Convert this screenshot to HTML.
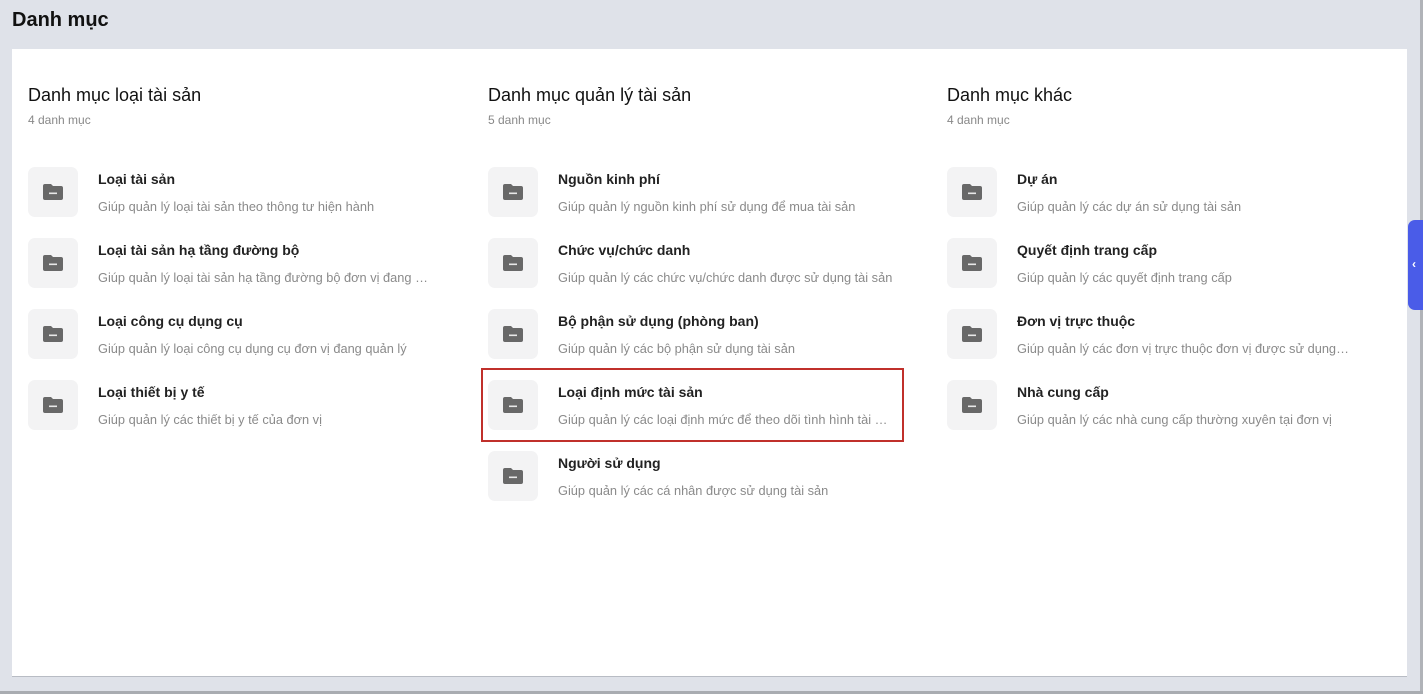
<!DOCTYPE html>
<html><head><meta charset="utf-8"><style>
*{margin:0;padding:0;box-sizing:border-box}
body{width:1423px;height:694px;background:#dfe2e9;font-family:"Liberation Sans","Noto Sans CJK SC",sans-serif;position:relative;overflow:hidden}
h1{position:absolute;left:12px;top:9px;font-size:20px;font-weight:bold;color:#111}
.panel{position:absolute;left:12px;top:49px;width:1395px;height:628px;background:#fff;border-bottom:1px solid #b8bcc4}
.rb{position:absolute;right:0;top:0;width:3px;height:694px;background:#b0b3b8}
.bb{position:absolute;left:0;bottom:0;width:1423px;height:3px;background:#a9acb1}
.tab{position:absolute;left:1408px;top:220px;width:15px;height:90px;background:#4a5ce8;border-radius:7px 0 0 7px;color:#fff;font-size:12px;line-height:88px;padding-left:4px;font-weight:bold}
.col{position:absolute;top:85px;width:420px}
.col h2{font-size:18px;font-weight:normal;color:#111;height:22px}
.col .cnt{font-size:12px;color:#888;margin-top:6px}
.item{position:absolute;left:0;height:50px;width:410px}
.ic{position:absolute;left:0;top:0;width:50px;height:50px;background:#f3f3f4;border-radius:7px}
.ic svg{position:absolute;left:15px;top:17px}
.t{position:absolute;left:70px;top:4px;font-size:14px;font-weight:bold;color:#222;white-space:nowrap}
.d{position:absolute;left:70px;top:32px;font-size:12.8px;color:#8a8a8a;white-space:nowrap;overflow:hidden;text-overflow:ellipsis;width:335px}
.sel{position:absolute;left:481px;top:368px;width:423px;height:74px;border:2px solid #c0302b}
</style></head><body>
<h1>Danh mục</h1>
<div class="panel"></div>
<div class="rb"></div><div class="bb"></div>
<div class="tab">‹</div>

<div class="col" style="left:28px">
<h2>Danh mục loại tài sản</h2><div class="cnt">4 danh mục</div>
</div>
<div class="col" style="left:488px">
<h2>Danh mục quản lý tài sản</h2><div class="cnt">5 danh mục</div>
</div>
<div class="col" style="left:947px">
<h2>Danh mục khác</h2><div class="cnt">4 danh mục</div>
</div>

<div id="items"></div>
<div class="sel"></div>
<script>
var cols=[[28,[["Loại tài sản","Giúp quản lý loại tài sản theo thông tư hiện hành"],["Loại tài sản hạ tầng đường bộ","Giúp quản lý loại tài sản hạ tầng đường bộ đơn vị đang quản lý"],["Loại công cụ dụng cụ","Giúp quản lý loại công cụ dụng cụ đơn vị đang quản lý"],["Loại thiết bị y tế","Giúp quản lý các thiết bị y tế của đơn vị"]]],
[488,[["Nguồn kinh phí","Giúp quản lý nguồn kinh phí sử dụng để mua tài sản"],["Chức vụ/chức danh","Giúp quản lý các chức vụ/chức danh được sử dụng tài sản"],["Bộ phận sử dụng (phòng ban)","Giúp quản lý các bộ phận sử dụng tài sản"],["Loại định mức tài sản","Giúp quản lý các loại định mức để theo dõi tình hình tài sản"],["Người sử dụng","Giúp quản lý các cá nhân được sử dụng tài sản"]]],
[947,[["Dự án","Giúp quản lý các dự án sử dụng tài sản"],["Quyết định trang cấp","Giúp quản lý các quyết định trang cấp"],["Đơn vị trực thuộc","Giúp quản lý các đơn vị trực thuộc đơn vị được sử dụng tài sản"],["Nhà cung cấp","Giúp quản lý các nhà cung cấp thường xuyên tại đơn vị"]]]];
var ic='<svg width="20" height="16" viewBox="0 0 20 16"><path d="M2 0h6l2 2h8a2 2 0 0 1 2 2v10a2 2 0 0 1-2 2H2a2 2 0 0 1-2-2V2a2 2 0 0 1 2-2z" fill="#686868"/><rect x="6" y="8.5" width="8" height="1.6" fill="#e8e8e8"/></svg>';
var h='';cols.forEach(function(c){c[1].forEach(function(it,i){h+='<div class="item" style="left:'+c[0]+'px;top:'+(167+i*71)+'px"><div class="ic">'+ic+'</div><div class="t">'+it[0]+'</div><div class="d">'+it[1]+'</div></div>';});});
document.getElementById('items').innerHTML=h;
</script>
</body></html>
